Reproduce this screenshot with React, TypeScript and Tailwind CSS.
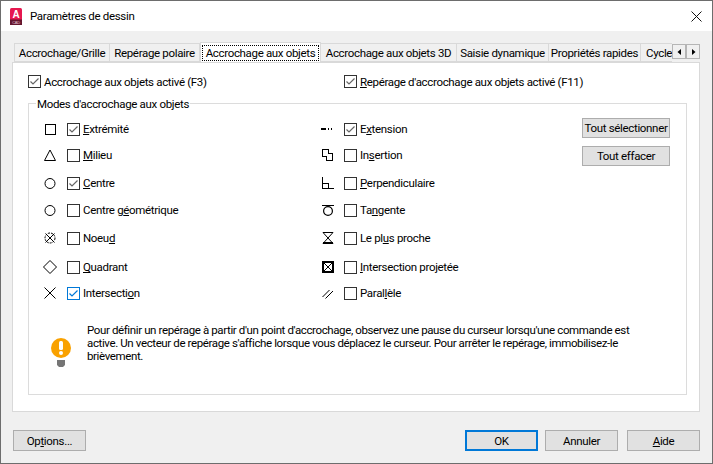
import type { ReactNode } from "react";

const iconProps = {
  width: 14,
  height: 14,
  viewBox: "0 0 14 14",
  fill: "none",
  stroke: "#000",
  strokeWidth: 1,
};

const icons: Record<string, ReactNode> = {
  end: <rect x="2.5" y="2.5" width="10" height="10" shapeRendering="crispEdges" />,
  mid: <path d="M7 2 L12.5 12.5 H1.5 Z" />,
  circle: <circle cx="7" cy="7.5" r="5" />,
  node: (
    <>
      <circle cx="7" cy="7" r="5" strokeDasharray="2 1" />
      <path d="M2.5 2.5 L11.5 11.5 M11.5 2.5 L2.5 11.5" />
    </>
  ),
  quad: <path d="M7 0.5 L13.5 7 L7 13.5 L0.5 7 Z" />,
  cross: <path d="M1.5 1.5 L12.5 12.5 M12.5 1.5 L1.5 12.5" />,
  ext: <path d="M0 7 H5 M7 7 H8 M10 7 H11" strokeWidth="2" shapeRendering="crispEdges" />,
  ins: <path d="M1.5 1.5 H7.5 V5.5 H11.5 V12.5 H5.5 V8.5 H1.5 Z" shapeRendering="crispEdges" strokeWidth="1.2" />,
  perp: <path d="M1.5 1 V12.5 H13 M1.5 7.5 H7.5 V12.5" shapeRendering="crispEdges" />,
  tan: (
    <>
      <path d="M1 2.5 H13" shapeRendering="crispEdges" />
      <circle cx="7" cy="8" r="4.4" strokeWidth="1.2" />
    </>
  ),
  near: <path d="M2 1.5 H12 L2 12.5 H12 L2 1.5 M2 11.5 H12" />,
  proj: (
    <>
      <rect x="2" y="2" width="10" height="10" shapeRendering="crispEdges" strokeWidth="1.2" />
      <path d="M2.5 2.5 L11.5 11.5 M11.5 2.5 L2.5 11.5" />
    </>
  ),
  par: <path d="M1.5 11 L8.5 4 M4.5 12.5 L12 5" />,
};

function Check({ on, blue }: { on?: boolean; blue?: boolean }) {
  return (
    <span
      className={`flex h-[13px] w-[13px] shrink-0 items-center justify-center border bg-white ${
        blue ? "border-[#0078d7]" : "border-[#333333]"
      }`}
    >
      {on && (
        <svg width="11" height="11" viewBox="0 0 11 11" fill="none">
          <path d="M1.5 5.5 L4 8 L9.5 2.5" stroke={blue ? "#0078d7" : "#666666"} strokeWidth="1.2" />
        </svg>
      )}
    </span>
  );
}

function Btn({ children, className = "", primary }: { children: ReactNode; className?: string; primary?: boolean }) {
  return (
    <button
      className={`flex items-center justify-center whitespace-nowrap bg-[#e1e1e1] text-black ${
        primary ? "border-2 border-[#0078d7]" : "border border-[#adadad]"
      } ${className}`}
    >
      {children}
    </button>
  );
}

const left = [
  { icon: "end", on: true, h: "h-[26px]", label: <><u>E</u>xtrémité</> },
  { icon: "mid", h: "h-[28px]", label: <><u>M</u>ilieu</> },
  { icon: "circle", on: true, h: "h-[27px]", label: <><u>C</u>entre</> },
  { icon: "circle", h: "h-[28px]", label: <>Centre g<u>é</u>ométrique</> },
  { icon: "node", h: "h-[29px]", label: <>Noeu<u>d</u></> },
  { icon: "quad", h: "h-[26px]", label: <><u>Q</u>uadrant</> },
  { icon: "cross", on: true, blue: true, h: "h-[20px]", label: <>Intersecti<u>o</u>n</> },
];

const right = [
  { icon: "ext", on: true, h: "h-[26px]", label: <>E<u>x</u>tension</> },
  { icon: "ins", h: "h-[28px]", label: <>In<u>s</u>ertion</> },
  { icon: "perp", h: "h-[27px]", label: <><u>P</u>erpendiculaire</> },
  { icon: "tan", h: "h-[28px]", label: <>Ta<u>n</u>gente</> },
  { icon: "near", h: "h-[29px]", label: <>Le pl<u>u</u>s proche</> },
  { icon: "proj", h: "h-[26px]", label: <><u>I</u>ntersection projetée</> },
  { icon: "par", h: "h-[20px]", label: <>Paral<u>l</u>èle</> },
];

type RowData = { icon: string; on?: boolean; blue?: boolean; h: string; label: ReactNode };

function Col({ rows, className, gap }: { rows: RowData[]; className: string; gap: string }) {
  return (
    <div className={className}>
      {rows.map((r) => (
        <div key={r.icon + r.h} className={r.h}>
          <div className="flex h-[20px] items-center">
            <span className="flex w-[22px] justify-center">
              <svg {...iconProps}>{icons[r.icon]}</svg>
            </span>
            <span className={gap}>
              <Check on={r.on} blue={r.blue} />
            </span>
            <span className="ml-[3px]">{r.label}</span>
          </div>
        </div>
      ))}
    </div>
  );
}

const tabs = [
  { name: "Accrochage/Grille", w: "w-[96px] justify-center" },
  { name: "Repérage polaire", w: "w-[90px] justify-center" },
  { name: "Accrochage aux objets", w: "w-[121px] justify-center", active: true },
  { name: "Accrochage aux objets 3D", w: "w-[136px] justify-center" },
  { name: "Saisie dynamique", w: "w-[92px] justify-center" },
  { name: "Propriétés rapides", w: "w-[92px] justify-center" },
  { name: "Cycle de sélection", w: "w-[110px] pl-[5px]" },
];

export default function App() {
  return (
    <div className="flex h-[464px] w-[713px] flex-col overflow-hidden border border-[#6d6d6d] bg-[#f0f0f0] font-['Roboto',sans-serif] text-[11.5px] leading-[16px] tracking-[-0.33px] text-black">
      <div className="flex h-[30px] shrink-0 items-center bg-white pl-[9px] pr-[10px]">
        <svg width="12" height="17" viewBox="0 0 12 17">
          <rect width="12" height="17" rx="1.5" fill="#e6174f" />
          <rect y="11.5" width="12" height="5.5" fill="#64162f" />
          <text x="6" y="10" textAnchor="middle" fontSize="10" fontWeight="700" fill="#fff" fontFamily="Liberation Sans">
            A
          </text>
          <text x="6" y="15.8" textAnchor="middle" fontSize="4" fill="#e8c5cf" fontFamily="Liberation Sans">
            CAD
          </text>
        </svg>
        <span className="ml-[8px] flex-1">Paramètres de dessin</span>
        <svg width="11" height="11" viewBox="0 0 11 11" stroke="#111" fill="none">
          <path d="M0.5 0.5 L10.5 10.5 M10.5 0.5 L0.5 10.5" />
        </svg>
      </div>

      <div className="flex flex-1 flex-col pl-[11px] pt-[11px]">
        <div className="relative z-10 flex h-[20px] w-[688px] items-end">
          <div className="flex w-[660px] items-end overflow-hidden pl-[2px]">
            {tabs.map((t) =>
              t.active ? (
                <div
                  key={t.name}
                  className={`-mb-px flex h-[21px] shrink-0 items-center whitespace-nowrap border border-b-0 border-[#d9d9d9] bg-white ${t.w}`}
                >
                  <span className="border border-dotted border-black px-[3px] leading-[14px]">{t.name}</span>
                </div>
              ) : (
                <div
                  key={t.name}
                  className={`flex h-[19px] shrink-0 items-center whitespace-nowrap border border-l-0 border-[#d9d9d9] first:border-l ${t.w}`}
                >
                  {t.name}
                </div>
              )
            )}
          </div>
          <div className="mb-[3px] flex">
            {["M6 2 L2.5 5 L6 8 Z", "M3 2 L6.5 5 L3 8 Z"].map((d) => (
              <span key={d} className="flex h-[15px] w-[14px] items-center justify-center border border-[#b5b5b5] bg-[#f0f0f0]">
                <svg width="9" height="10" viewBox="0 0 9 10">
                  <path d={d} fill="#000" />
                </svg>
              </span>
            ))}
          </div>
        </div>

        <div className="h-[350px] w-[688px] border border-[#d9d9d9] bg-white pl-[15px] pt-[12px]">
          <div className="flex h-[13px] items-center">
            <Check on />
            <span className="ml-[3px] w-[300px]">Accrochage aux objets activé (F3)</span>
            <Check on />
            <span className="ml-[3px]">
              <u>R</u>epérage d'accrochage aux objets activé (F11)
            </span>
          </div>

          <div className="mt-[15px] h-[292px] w-[659px] border border-[#dcdcdc]">
            <div className="-mt-[8px] ml-[7px] w-fit bg-white px-[1px]">Modes d'accrochage aux objets</div>

            <div className="ml-[10px] mt-[7px] flex">
              <Col rows={left} className="w-[278px]" gap="ml-[6px]" />
              <Col rows={right} className="w-[265px]" gap="ml-[5px]" />
              <div className="-mt-px flex flex-col gap-[8px]">
                <Btn className="h-[20px] w-[88px]">Tout sélectionner</Btn>
                <Btn className="h-[20px] w-[88px]">Tout effacer</Btn>
              </div>
            </div>

            <div className="ml-[22px] mt-[21px] flex items-start">
              <svg className="mt-[14px] shrink-0" width="20" height="30" viewBox="0 0 20 30">
                <circle cx="10" cy="10" r="10" fill="#f9a100" />
                <rect x="8" y="3" width="4" height="9" rx="1.5" fill="#fff" />
                <circle cx="10" cy="15" r="2" fill="#fff" />
                <path d="M6 22 H14 V27 L12 29 H8 L6 27 Z" fill="#757575" />
              </svg>
              <p className="ml-[16px] whitespace-nowrap leading-[13px] tracking-[-0.38px]">
                Pour définir un repérage à partir d'un point d'accrochage, observez une pause du curseur lorsqu'une commande est
                <br />
                active. Un vecteur de repérage s'affiche lorsque vous déplacez le curseur. Pour arrêter le repérage, immobilisez-le
                <br />
                brièvement.
              </p>
            </div>
          </div>
        </div>

        <div className="mt-[18px] flex w-[688px] pl-[1px]">
          <Btn className="h-[21px] w-[73px]">
            <span>
              Op<u>t</u>ions...
            </span>
          </Btn>
          <Btn primary className="ml-auto h-[21px] w-[73px]">OK</Btn>
          <Btn className="ml-[7px] h-[21px] w-[73px]">Annuler</Btn>
          <Btn className="ml-[9px] h-[21px] w-[73px]">
            <span>
              <u>A</u>ide
            </span>
          </Btn>
        </div>
      </div>
    </div>
  );
}
